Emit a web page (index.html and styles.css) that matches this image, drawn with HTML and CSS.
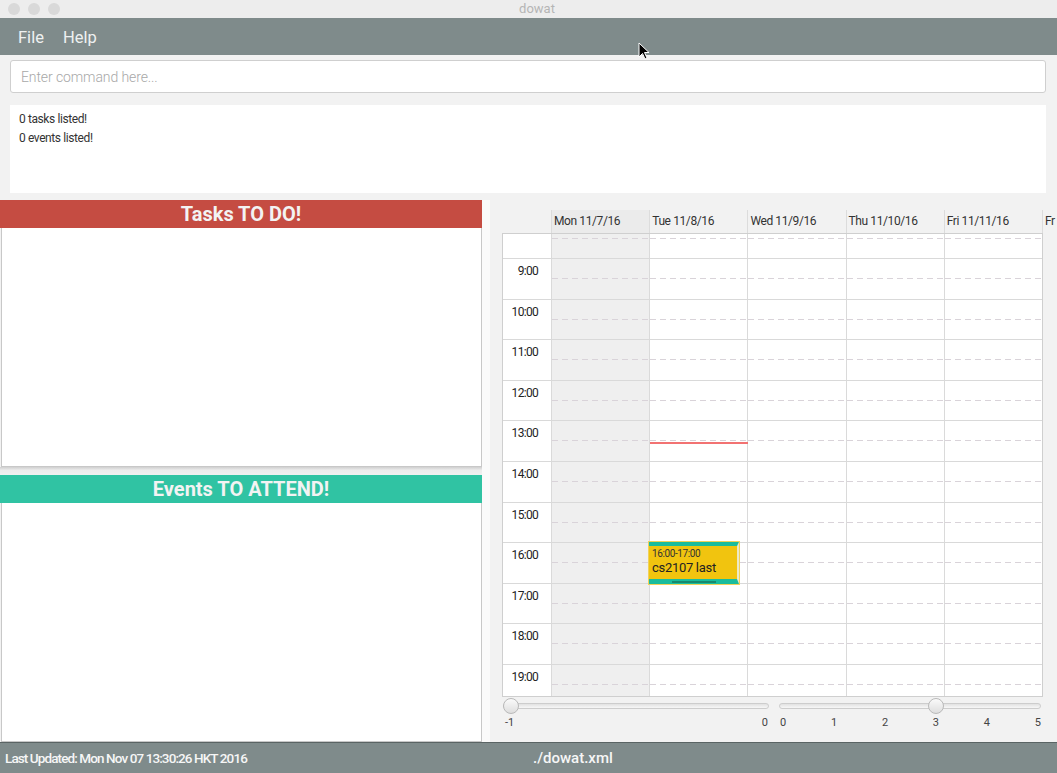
FILE: index.html
```html
<!DOCTYPE html>
<html>
<head>
<meta charset="utf-8">
<title>dowat</title>
<link rel="stylesheet" href="styles.css">
</head>
<body>
<div class="window">
  <div class="titlebar">
    <div class="lights"><span></span><span></span><span></span></div>
    <div class="title">dowat</div>
  </div>
  <div class="menubar">
    <span class="menu-item">File</span>
    <span class="menu-item">Help</span>
  </div>
  <div class="command">Enter command here...</div>
  <div class="result">
    <p>0 tasks listed!</p>
    <p>0 events listed!</p>
  </div>
  <div class="content">
    <div class="left">
      <div class="panel-head tasks">Tasks TO DO!</div>
      <div class="list"></div>
      <div class="sep"></div>
      <div class="panel-head events">Events TO ATTEND!</div>
      <div class="list"></div>
    </div>
    <div class="splitter"></div>
    <div class="right">
      <div class="cal">
        <div class="cal-head">
          <div class="hcell blank"></div>
          <div class="hcell today">Mon 11/7/16</div>
          <div class="hcell">Tue 11/8/16</div>
          <div class="hcell">Wed 11/9/16</div>
          <div class="hcell">Thu 11/10/16</div>
          <div class="hcell">Fri 11/11/16</div>
          <div class="hcell partial">Fr</div>
        </div>
        <div class="cal-body">
          <div class="row first"><div class="time"></div><div class="day today"></div><div class="day"></div><div class="day"></div><div class="day"></div><div class="day"></div></div>
          <div class="row"><div class="time">9:00</div><div class="day today"></div><div class="day"></div><div class="day"></div><div class="day"></div><div class="day"></div></div>
          <div class="row"><div class="time">10:00</div><div class="day today"></div><div class="day"></div><div class="day"></div><div class="day"></div><div class="day"></div></div>
          <div class="row"><div class="time">11:00</div><div class="day today"></div><div class="day"></div><div class="day"></div><div class="day"></div><div class="day"></div></div>
          <div class="row"><div class="time">12:00</div><div class="day today"></div><div class="day"></div><div class="day"></div><div class="day"></div><div class="day"></div></div>
          <div class="row"><div class="time">13:00</div><div class="day today"></div><div class="day"></div><div class="day"></div><div class="day"></div><div class="day"></div></div>
          <div class="row"><div class="time">14:00</div><div class="day today"></div><div class="day"></div><div class="day"></div><div class="day"></div><div class="day"></div></div>
          <div class="row"><div class="time">15:00</div><div class="day today"></div><div class="day"></div><div class="day"></div><div class="day"></div><div class="day"></div></div>
          <div class="row"><div class="time">16:00</div><div class="day today"></div><div class="day"></div><div class="day"></div><div class="day"></div><div class="day"></div></div>
          <div class="row"><div class="time">17:00</div><div class="day today"></div><div class="day"></div><div class="day"></div><div class="day"></div><div class="day"></div></div>
          <div class="row"><div class="time">18:00</div><div class="day today"></div><div class="day"></div><div class="day"></div><div class="day"></div><div class="day"></div></div>
          <div class="row last"><div class="time">19:00</div><div class="day today"></div><div class="day"></div><div class="day"></div><div class="day"></div><div class="day"></div></div>
          <div class="now-line"></div>
          <div class="event">
            <div class="ev-time">16:00-17:00</div>
            <div class="ev-title">cs2107 last</div>
            <div class="ev-grip"></div>
          </div>
        </div>
      </div>
      <div class="sliders">
        <div class="slider s-left">
          <div class="track"><span class="thumb"></span></div>
          <div class="ticks"><span>-1</span><span>0</span></div>
        </div>
        <div class="slider s-right">
          <div class="track"><span class="thumb"></span></div>
          <div class="ticks"><span>0</span><span>1</span><span>2</span><span>3</span><span>4</span><span>5</span></div>
        </div>
      </div>
    </div>
  </div>
  <div class="status">
    <span class="st-left">Last Updated: Mon Nov 07 13:30:26 HKT 2016</span>
    <span class="st-file">./dowat.xml</span>
  </div>
  <svg class="cursor" width="12" height="19" viewBox="0 0 12 19"><path d="M1 1 L1 15 L4.5 11.5 L7 17 L9 16 L6.5 10.5 L11 10.5 Z" fill="#000" stroke="#fff" stroke-width="1"/></svg>
</div>
</body>
</html>
```

FILE: styles.css
```css
* { box-sizing: border-box; }
html, body { margin: 0; padding: 0; }
body {
  width: 1057px;
  height: 773px;
  overflow: hidden;
  background: #f2f2f2;
  font-family: Roboto, "Liberation Sans", sans-serif;
  color: #333;
}
.window {
  position: relative;
  width: 1057px;
  height: 773px;
  display: flex;
  flex-direction: column;
}
.titlebar {
  height: 18px;
  background: #ededed;
  display: flex;
  align-items: center;
  position: relative;
}
.lights { display: flex; gap: 8px; padding-left: 8px; }
.lights span {
  width: 12px; height: 12px; border-radius: 50%;
  background: #d9d9d9;
}
.title {
  position: absolute; left: 0; right: 0; top: 0;
  text-align: center; font-size: 13px; line-height: 18px;
  color: #b5b5b5;
  padding-left: 17px;
}
.menubar {
  height: 37px;
  background: #7f8b8b;
  display: flex;
  align-items: center;
  padding-left: 18px;
  gap: 19px;
}
.menu-item { font-size: 16.5px; color: #eef1f1; padding-top: 1px; }
.command {
  margin: 5px 11px 0 10px;
  height: 33px;
  background: #fff;
  border: 1px solid #cfcfcf;
  border-radius: 3px;
  font-size: 14px;
  font-weight: 300;
  color: #a8a8a8;
  padding-left: 10px;
  line-height: 32px;
  letter-spacing: -0.1px;
}
.result {
  margin: 12px 11px 0 10px;
  height: 88px;
  background: #fff;
  padding: 5px 0 0 9px;
}
.result p {
  margin: 0;
  font-size: 12px;
  line-height: 19px;
  color: #333;
  letter-spacing: -0.4px;
}
.content {
  margin-top: 7px;
  height: 542px;
  display: flex;
}
.left {
  width: 482px;
  display: flex;
  flex-direction: column;
}
.panel-head {
  height: 28px;
  text-align: center;
  font-size: 20px;
  font-weight: 700;
  color: #f3f3f3;
  line-height: 28px;
}
.tasks { background: #c54c42; }
.events { background: #30c3a3; }
.list {
  height: 239px;
  background: #fff;
  border: 1px solid #c8c8c8;
  border-top: none;
  margin-left: 1px;
}
.sep {
  height: 8px;
  background: linear-gradient(#cfcfcf, #ececec 40%, #f0f0f0);
}
.splitter { width: 8px; background: #fafafa; }
.right {
  flex: 1;
  padding: 10px 0 0 12px;
  display: flex;
  flex-direction: column;
  overflow: hidden;
}
.cal { width: 555px; overflow: hidden; }
.cal-head {
  display: grid;
  grid-template-columns: 48px repeat(5, 98.2px) 1fr;
  height: 23px;
  margin-left: 1px;
}
.hcell {
  border-left: 1px solid #dcdcdc;
  font-size: 12px;
  color: #333;
  padding: 4px 0 0 2px;
  white-space: nowrap;
  overflow: hidden;
  letter-spacing: -0.4px;
}
.hcell.blank { border-left: none; }
.hcell.today { background: #ebebeb; }
.cal-body {
  position: relative;
  width: 541px;
  height: 464px;
  border: 1px solid #cfcfcf;
  background: #fff;
  display: flex;
  flex-direction: column;
}
.row {
  height: 40.6px;
  display: grid;
  grid-template-columns: 48px repeat(5, 1fr);
  border-top: 1px solid #d9d9d9;
}
.row.first { height: 24px; border-top: none; }
.row.last { flex: 1; height: auto; }
.time {
  background: #fff;
  font-size: 12px;
  text-align: right;
  padding: 5px 13px 0 0;
  color: #222;
  letter-spacing: -0.7px;
}
.day {
  border-left: 1px solid #dadada;
  background-image: repeating-linear-gradient(90deg, #d9d3d9 0 6px, transparent 6px 10px);
  background-size: 100% 1px;
  background-position: 0 19px;
  background-repeat: no-repeat;
}
.row.first .day { background-position: 0 4px; }
.day.today { background-color: #efefef; }
.now-line {
  position: absolute;
  left: 147px;
  top: 208px;
  width: 98px;
  height: 2px;
  background: #f27272;
}
.event {
  position: absolute;
  left: 146px;
  top: 308px;
  width: 90px;
  height: 42px;
  background: #f1c40f;
  border-top: 4px solid #1abc9c;
  border-bottom: 5px solid #1abc9c;
  border-right: 2px solid #ece9c8;
  box-shadow: 0 0 0 1px #f1d25a;
  padding: 2px 0 0 3px;
}
.ev-time { font-size: 10px; line-height: 12px; color: #333; letter-spacing: -0.4px; }
.ev-title { font-size: 13px; line-height: 16px; color: #222; letter-spacing: -0.3px; }
.ev-grip {
  position: absolute;
  left: 23px;
  bottom: -4px;
  width: 44px;
  height: 2px;
  background: #178a6c;
}
.sliders {
  display: flex;
  gap: 10px;
  margin-top: 6px;
}
.slider { display: flex; flex-direction: column; }
.s-left { width: 266px; margin-left: 1px; }
.s-right { width: 262px; }
.track {
  position: relative;
  height: 6px;
  border: 1px solid #cdcdcd;
  border-radius: 3px;
  background: linear-gradient(#e2e2e2, #f7f7f7);
}
.thumb {
  position: absolute;
  top: -6px;
  width: 16px;
  height: 16px;
  border-radius: 50%;
  border: 1px solid #b9b9b9;
  background: linear-gradient(#fafafa, #dedede);
}
.s-left .thumb { left: -1px; }
.s-right .thumb { left: 148px; }
.ticks {
  display: flex;
  justify-content: space-between;
  font-size: 11px;
  color: #444;
  margin-top: 7px;
}
.s-left .ticks { padding: 0 1px 0 2px; }
.s-right .ticks { padding: 0 0 0 1px; }
.status {
  height: 31px;
  margin-top: auto;
  background: #7f8b8b;
  border-top: 1px solid #5a6464;
  display: flex;
  align-items: center;
  color: #f6f6f6;
  font-weight: 500;
}
.st-left { width: 533px; padding-left: 5px; font-size: 13.5px; letter-spacing: -0.9px; }
.st-file { font-size: 15px; letter-spacing: 0; }
.cursor { position: absolute; left: 638px; top: 42px; }
```
